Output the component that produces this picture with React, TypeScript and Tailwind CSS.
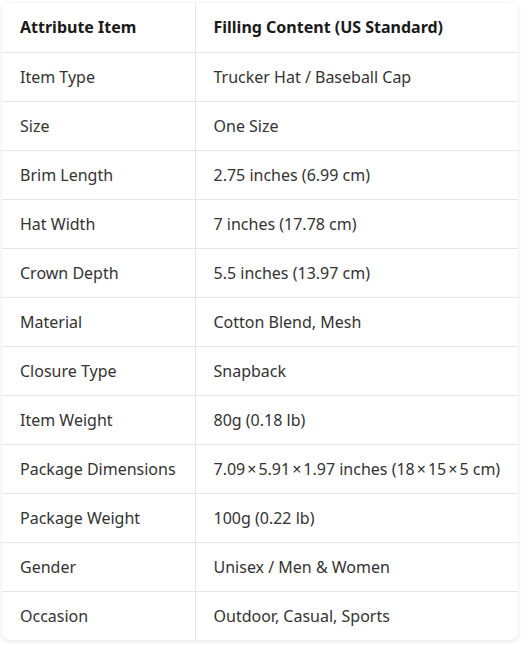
const rows: [string, string][] = [
  ["Item Type", "Trucker Hat / Baseball Cap"],
  ["Size", "One Size"],
  ["Brim Length", "2.75 inches (6.99 cm)"],
  ["Hat Width", "7 inches (17.78 cm)"],
  ["Crown Depth", "5.5 inches (13.97 cm)"],
  ["Material", "Cotton Blend, Mesh"],
  ["Closure Type", "Snapback"],
  ["Item Weight", "80g (0.18 lb)"],
  ["Package Dimensions", "7.09×5.91×1.97 inches (18×15×5 cm)"],
  ["Package Weight", "100g (0.22 lb)"],
  ["Gender", "Unisex / Men & Women"],
  ["Occasion", "Outdoor, Casual, Sports"],
];

// the × sign sits a bit looser in the original
function Value({ text }: { text: string }) {
  const parts = text.split("×");
  return (
    <>
      {parts.map((p, i) => (
        <span key={i}>
          {i > 0 && <span className="mx-[2px]">×</span>}
          {p}
        </span>
      ))}
    </>
  );
}

export default function App() {
  return (
    <div className="min-h-screen bg-white pl-[2px] pt-[3px] font-['Noto_Sans',sans-serif]">
      <div className="w-[516px] overflow-hidden rounded-lg bg-white shadow-[0_1px_4px_rgba(0,0,0,0.12)]">
        <table className="w-full border-collapse text-[16px]">
          <thead>
            <tr className="h-[49px] border-b border-[#e5e5e5]">
              <th className="w-[193px] border-r border-[#e5e5e5] pl-[18px] text-left font-bold text-[#1a1a1a]">
                Attribute Item
              </th>
              <th className="pl-[18px] text-left font-bold text-[#1a1a1a]">
                Filling Content (US Standard)
              </th>
            </tr>
          </thead>
          <tbody>
            {rows.map(([k, v], i) => (
              <tr
                key={k}
                className={i < rows.length - 1 ? "h-[49px] border-b border-[#e5e5e5]" : "h-[49px]"}
              >
                <td className="border-r border-[#e5e5e5] pl-[18px] text-[#333]">{k}</td>
                <td className="pl-[18px] text-[#333]">
                  <Value text={v} />
                </td>
              </tr>
            ))}
          </tbody>
        </table>
      </div>
    </div>
  );
}
